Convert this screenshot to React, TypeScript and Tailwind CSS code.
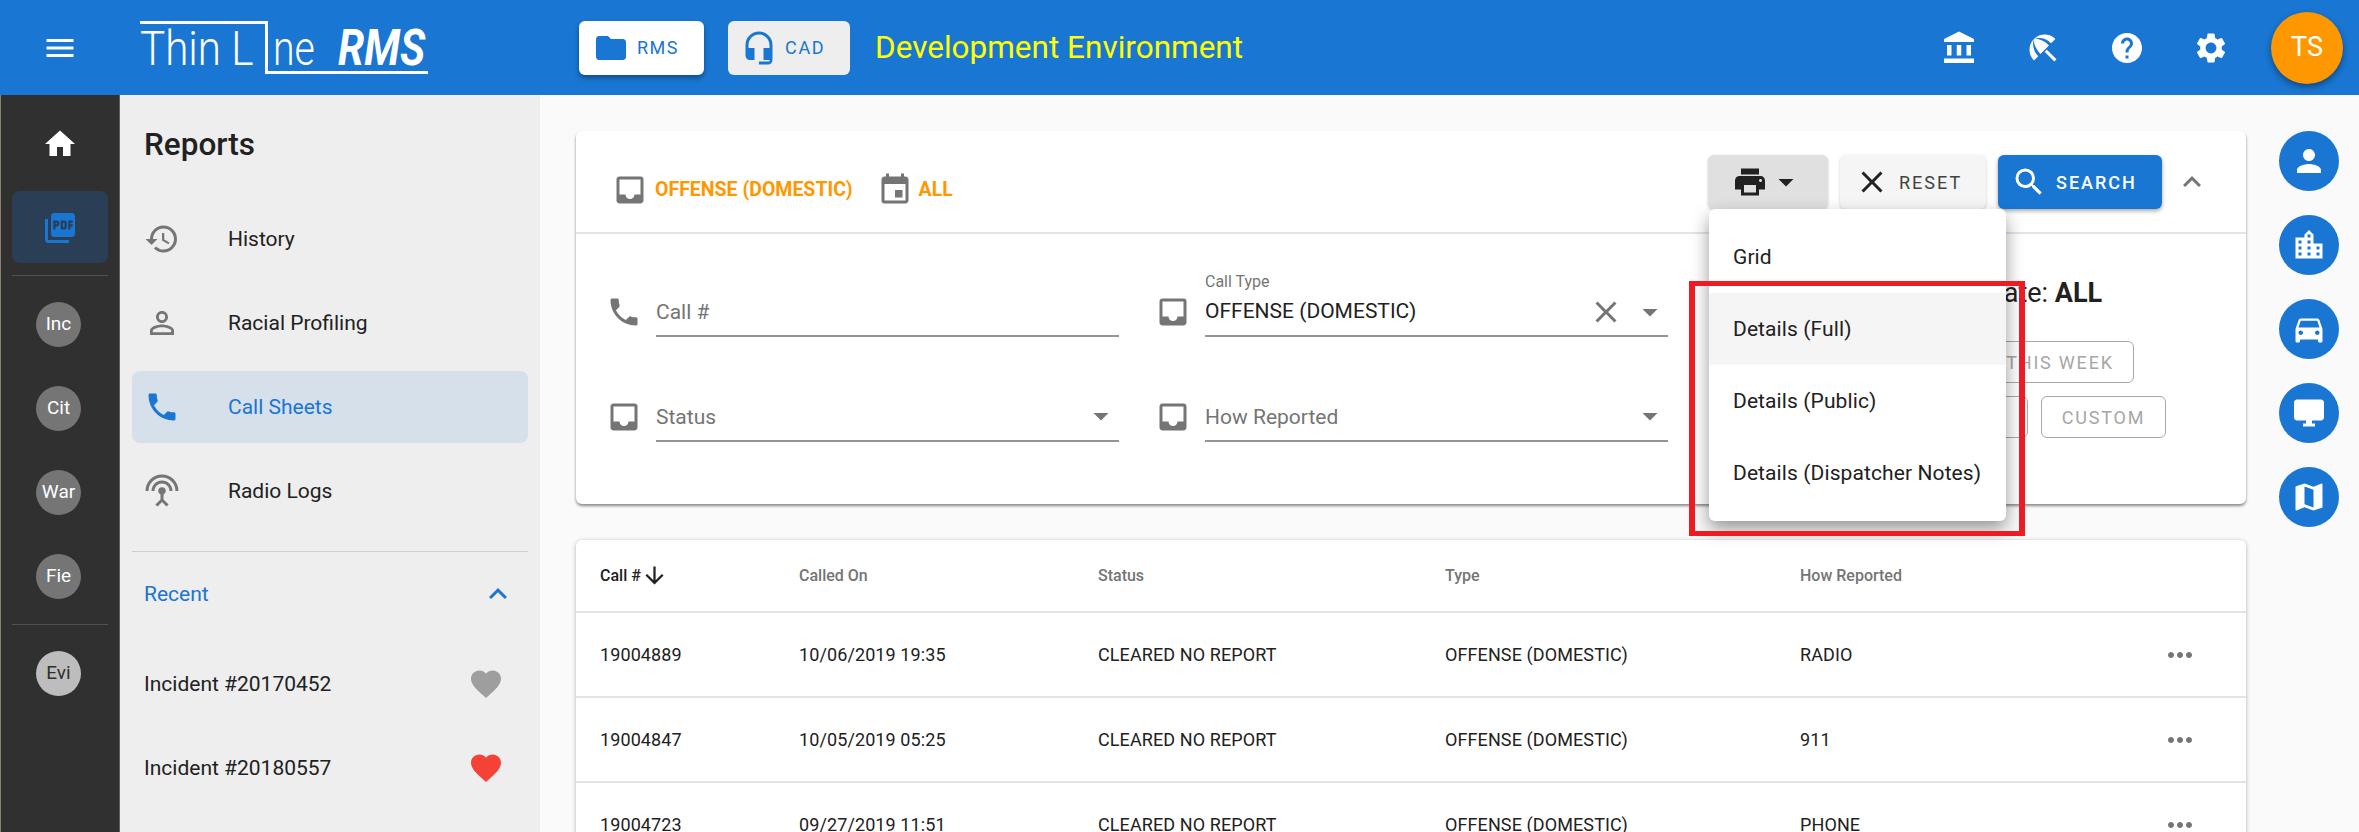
import { ReactNode } from 'react';
import {
  MdAccountBalance,
  MdArrowDownward,
  MdArrowDropDown,
  MdBeachAccess,
  MdClose,
  MdDesktopWindows,
  MdDirectionsCar,
  MdEvent,
  MdExpandLess,
  MdFavorite,
  MdFolder,
  MdHeadsetMic,
  MdHelp,
  MdHistory,
  MdHome,
  MdInbox,
  MdLocationCity,
  MdMap,
  MdMenu,
  MdMoreHoriz,
  MdPerson,
  MdPersonOutline,
  MdPhone,
  MdPictureAsPdf,
  MdPrint,
  MdSearch,
  MdSettings,
  MdSettingsInputAntenna,
} from 'react-icons/md';

const navItems = [
  { label: 'History', icon: MdHistory },
  { label: 'Racial Profiling', icon: MdPersonOutline },
  { label: 'Call Sheets', icon: MdPhone, active: true },
  { label: 'Radio Logs', icon: MdSettingsInputAntenna },
];

const rows = [
  { id: '19004889', on: '10/06/2019 19:35', how: 'RADIO' },
  { id: '19004847', on: '10/05/2019 05:25', how: '911' },
  { id: '19004723', on: '09/27/2019 11:51', how: 'PHONE' },
];

const menuItems = ['Grid', 'Details (Full)', 'Details (Public)', 'Details (Dispatcher Notes)'];

const tableCols = 'grid grid-cols-[199px_299px_347px_355px_1fr_100px] items-center pl-[24px]';

function RailBadge({ label, light }: { label: string; light?: boolean }) {
  return (
    <div
      className={`ml-[35px] w-[45px] h-[45px] rounded-full flex items-center justify-center text-[19px] ${
        light ? 'bg-[#bdbdbd] text-[#303030]' : 'bg-[#757575] text-white'
      }`}
    >
      {label}
    </div>
  );
}

function Field({ icon, label, value, select, clear }: { icon: ReactNode; label?: string; value?: string; select?: boolean; clear?: boolean }) {
  return (
    <div className="flex items-end h-[66px]">
      <div className="w-[36px] h-[50px] flex items-center justify-center text-[#757575]">{icon}</div>
      <div className="ml-[14px] flex-1 flex flex-col justify-end">
        {value && <div className="text-[16px] leading-[18px] text-[#757575]">{label}</div>}
        <div className={`border-b-2 border-[#949494] flex items-center ${value ? 'h-[46px] pb-[2px]' : 'h-[50px]'}`}>
          <span className={`flex-1 text-[21px] ${value ? 'text-[#212121]' : 'pt-[3px] text-[#757575]'}`}>{value ?? label}</span>
          {clear && <MdClose size={36} className="text-[#757575] mr-[8px]" />}
          {select && <MdArrowDropDown size={36} className="text-[#757575]" />}
        </div>
      </div>
    </div>
  );
}

function RangeButton({ label, className }: { label: string; className: string }) {
  return (
    <div className={`h-[42px] rounded-md border border-[#a8a8a8] flex items-center justify-center text-[18px] tracking-[1.8px] text-[#a6a6a6] ${className}`}>
      {label}
    </div>
  );
}

function SideCircle({ children }: { children: ReactNode }) {
  return <div className="w-[60px] h-[60px] rounded-full bg-[#1976d2] text-white flex items-center justify-center">{children}</div>;
}

export default function App() {
  return (
    <div className="w-[2359px] h-[832px] overflow-hidden flex flex-col bg-[#fafafa] text-[#212121] font-['Roboto',sans-serif]">
      {/* App bar */}
      <header className="h-[95px] shrink-0 bg-[#1976d2] flex items-center text-white">
        <div className="w-[120px] flex justify-center">
          <MdMenu size={36} />
        </div>
        {/* Logo */}
        <div className="relative ml-[20px] w-[288px] h-[53px] mt-[-1px]">
          <div className="absolute left-0 top-0 w-[126px] h-[3px] bg-white" />
          <div className="absolute left-[125px] top-0 bottom-0 w-[3px] bg-white" />
          <div className="absolute left-[125px] right-0 bottom-0 h-[3px] bg-white" />
          <span className="absolute left-0 top-[-1px] text-[49px] leading-[57px] font-light origin-left scale-x-[0.86] whitespace-nowrap">Thin L</span>
          <span className="absolute left-[133px] top-[-1px] text-[49px] leading-[57px] font-light origin-left scale-x-[0.8]">ne</span>
          <span className="absolute left-[198px] top-[-1px] text-[49px] leading-[57px] font-bold italic origin-left scale-x-[0.86]">RMS</span>
        </div>
        <div className="ml-[151px] w-[125px] h-[54px] rounded-md bg-white text-[#1976d2] flex items-center shadow-[0_3px_5px_rgba(0,0,0,0.35)]">
          <MdFolder size={36} className="ml-[14px]" />
          <span className="ml-[8px] text-[18px] tracking-[1.5px]">RMS</span>
        </div>
        <div className="ml-[24px] w-[122px] h-[54px] rounded-md bg-[#eeeeee] text-[#1976d2] flex items-center">
          <MdHeadsetMic size={36} className="ml-[13px]" />
          <span className="ml-[8px] text-[18px] tracking-[1.7px]">CAD</span>
        </div>
        <div className="ml-[25px] text-[31.5px] text-[#ffff00]">Development Environment</div>
        <div className="ml-auto flex items-center gap-[48px] pr-[16px]">
          <MdAccountBalance size={36} />
          <MdBeachAccess size={36} />
          <MdHelp size={36} />
          <MdSettings size={36} />
          <div className="w-[72px] h-[72px] rounded-full bg-[#ff9800] flex items-center justify-center text-[27px] ml-[-6px] shadow-[0_3px_6px_rgba(0,0,0,0.4)]">TS</div>
        </div>
      </header>

      <div className="flex-1 flex min-h-0">
        {/* Module rail */}
        <aside className="w-[120px] shrink-0 bg-[#303030] border-l border-l-[#8a8070] border-r border-r-[#5e5e5e] flex flex-col">
          <div className="mt-[12px] mx-[11px] h-[72px] pt-[2px] flex items-center justify-center text-white">
            <MdHome size={36} />
          </div>
          <div className="mt-[12px] mx-[11px] h-[72px] pt-[2px] rounded-lg bg-[#2a3f55] flex items-center justify-center text-[#1976d2]">
            <MdPictureAsPdf size={36} />
          </div>
          <div className="mt-[12px] mx-[11px] h-px bg-[#505050]" />
          <div className="mt-[26px] flex flex-col gap-[39px]">
            <RailBadge label="Inc" />
            <RailBadge label="Cit" />
            <RailBadge label="War" />
            <RailBadge label="Fie" />
          </div>
          <div className="mt-[25px] mx-[11px] h-px bg-[#505050]" />
          <div className="mt-[26px]">
            <RailBadge label="Evi" light />
          </div>
        </aside>

        {/* Section nav */}
        <nav className="w-[420px] shrink-0 bg-[#eeeeee] px-[12px]">
          <h2 className="pl-[12px] pt-[28px] pb-[36px] text-[31.5px] leading-[44px] font-medium">Reports</h2>
          <div className="flex flex-col gap-[12px]">
            {navItems.map(({ label, icon: Icon, active }) => (
              <div key={label} className={`h-[72px] rounded-lg flex items-center pl-[12px] ${active ? 'bg-[#d6e0eb] text-[#1976d2]' : ''}`}>
                <Icon size={36} className={active ? '' : 'text-[#757575]'} />
                <span className="ml-[48px] pt-[2px] text-[21px]">{label}</span>
              </div>
            ))}
          </div>
          <div className="mt-[24px] h-px bg-[#cfcfcf]" />
          <div className="mt-[6px] h-[72px] flex items-center justify-between pl-[12px] pr-[12px] text-[#1976d2]">
            <span className="pt-[2px] text-[21px]">Recent</span>
            <MdExpandLess size={36} />
          </div>
          <div className="mt-[18px] flex flex-col gap-[12px]">
            <div className="h-[72px] flex items-center justify-between pl-[12px] pr-[24px]">
              <span className="pt-[1px] text-[21px]">Incident #20170452</span>
              <MdFavorite size={36} className="text-[#9e9e9e]" />
            </div>
            <div className="h-[72px] flex items-center justify-between pl-[12px] pr-[24px]">
              <span className="pt-[1px] text-[21px]">Incident #20180557</span>
              <MdFavorite size={36} className="text-[#f44336]" />
            </div>
          </div>
        </nav>

        {/* Main content */}
        <main className="flex-1 min-w-0 pl-[36px] pt-[36px]">
          <section className="relative h-[373px] bg-white rounded-md shadow-[0_2px_3px_rgba(0,0,0,0.45)]">
            <div className="h-[103px] border-b-2 border-[#e4e4e4] flex items-center pl-[36px] pr-[36px]">
              <div className="flex items-center pt-[16px]">
                <MdInbox size={36} className="text-[#757575]" />
                <span className="ml-[7px] text-[19.5px] font-bold text-[#ff9800]">OFFENSE (DOMESTIC)</span>
                <MdEvent size={36} className="ml-[24px] text-[#757575]" />
                <span className="ml-[6px] text-[19.5px] font-bold text-[#ff9800]">ALL</span>
              </div>
              <div className="ml-auto flex items-center">
                <div className="w-[120px] h-[54px] rounded-md bg-[#e0e0e0] flex items-center pl-[24px] shadow-[0_1px_3px_rgba(0,0,0,0.2)]">
                  <MdPrint size={36} />
                  <MdArrowDropDown size={36} />
                </div>
                <div className="ml-[12px] w-[146px] h-[54px] rounded-md bg-[#f5f5f5] flex items-center pl-[14px] shadow-[0_1px_3px_rgba(0,0,0,0.2)]">
                  <MdClose size={36} />
                  <span className="ml-[9px] pt-[2px] text-[18px] tracking-[2px] text-[#424242]">RESET</span>
                </div>
                <div className="ml-[12px] w-[164px] h-[54px] rounded-md bg-[#1976d2] text-white flex items-center pl-[13px] shadow-[0_2px_4px_rgba(0,0,0,0.35)]">
                  <MdSearch size={36} />
                  <span className="ml-[9px] pt-[2px] text-[18px] font-medium tracking-[2px]">SEARCH</span>
                </div>
                <MdExpandLess size={36} className="ml-[12px] text-[#757575]" />
              </div>
            </div>

            <div className="flex pl-[30px]">
              <div className="w-[1062px] pt-[37px] grid grid-cols-2 gap-x-[36px] gap-y-[39px]">
                <Field icon={<MdPhone size={36} />} label="Call #" />
                <Field icon={<MdInbox size={36} />} label="Call Type" value="OFFENSE (DOMESTIC)" select clear />
                <Field icon={<MdInbox size={36} />} label="Status" select />
                <Field icon={<MdInbox size={36} />} label="How Reported" select />
              </div>
              <div className="ml-[44px] pt-[39px]">
                <div className="h-[40px] pl-[274px] flex items-center text-[27px] whitespace-nowrap">
                  Date:&nbsp;<b className="font-bold">ALL</b>
                </div>
                <div className="mt-[28px] flex gap-[13px]">
                  <RangeButton label="ALL" className="w-[126px]" />
                  <RangeButton label="TODAY" className="w-[126px]" />
                  <RangeButton label="THIS WEEK" className="w-[144px] pr-[4px]" />
                </div>
                <div className="mt-[13px] flex gap-[13px]">
                  <RangeButton label="LAST WEEK" className="w-[154px]" />
                  <RangeButton label="THIS YEAR" className="w-[149px]" />
                  <RangeButton label="CUSTOM" className="w-[125px]" />
                </div>
              </div>
            </div>

            {/* Print menu */}
            <div className="absolute z-10 left-[1133px] top-[78px] w-[297px] h-[312px] py-[12px] rounded-md bg-white shadow-[0_8px_18px_rgba(0,0,0,0.4)]">
              {menuItems.map((item) => (
                <div key={item} className={`h-[72px] pl-[24px] pt-[2px] flex items-center whitespace-nowrap text-[21px] tracking-[0.1px] ${item === 'Details (Full)' ? 'bg-[#f5f5f5]' : ''}`}>
                  {item}
                </div>
              ))}
            </div>
            {/* Annotation box */}
            <div className="absolute z-20 left-[1113px] top-[150px] w-[336px] h-[255px] border-x-[6px] border-y-[5px] border-[#ed1c24]" />
          </section>

          <section className="mt-[36px] bg-white rounded-md shadow-[0_1px_4px_rgba(0,0,0,0.3)]">
            <div className={`${tableCols} h-[73px] border-b-2 border-[#e4e4e4] text-[16px] font-medium text-[#757575]`}>
              <span className="flex items-center text-[#212121]">
                Call #
                <MdArrowDownward size={27} />
              </span>
              <span>Called On</span>
              <span>Status</span>
              <span>Type</span>
              <span>How Reported</span>
            </div>
            {rows.map((row) => (
              <div key={row.id} className={`${tableCols} h-[85px] border-b-2 border-[#e4e4e4] text-[18px] tracking-[0.1px]`}>
                <span>{row.id}</span>
                <span>{row.on}</span>
                <span>CLEARED NO REPORT</span>
                <span>OFFENSE (DOMESTIC)</span>
                <span>{row.how}</span>
                <MdMoreHoriz size={36} className="ml-[16px] text-[#757575]" />
              </div>
            ))}
          </section>
        </main>

        {/* Quick links */}
        <aside className="w-[113px] shrink-0 pl-[33px] pt-[36px] flex flex-col gap-[24px]">
          <SideCircle><MdPerson size={36} /></SideCircle>
          <SideCircle><MdLocationCity size={36} /></SideCircle>
          <SideCircle><MdDirectionsCar size={36} /></SideCircle>
          <SideCircle><MdDesktopWindows size={36} /></SideCircle>
          <SideCircle><MdMap size={36} /></SideCircle>
        </aside>
      </div>
    </div>
  );
}
